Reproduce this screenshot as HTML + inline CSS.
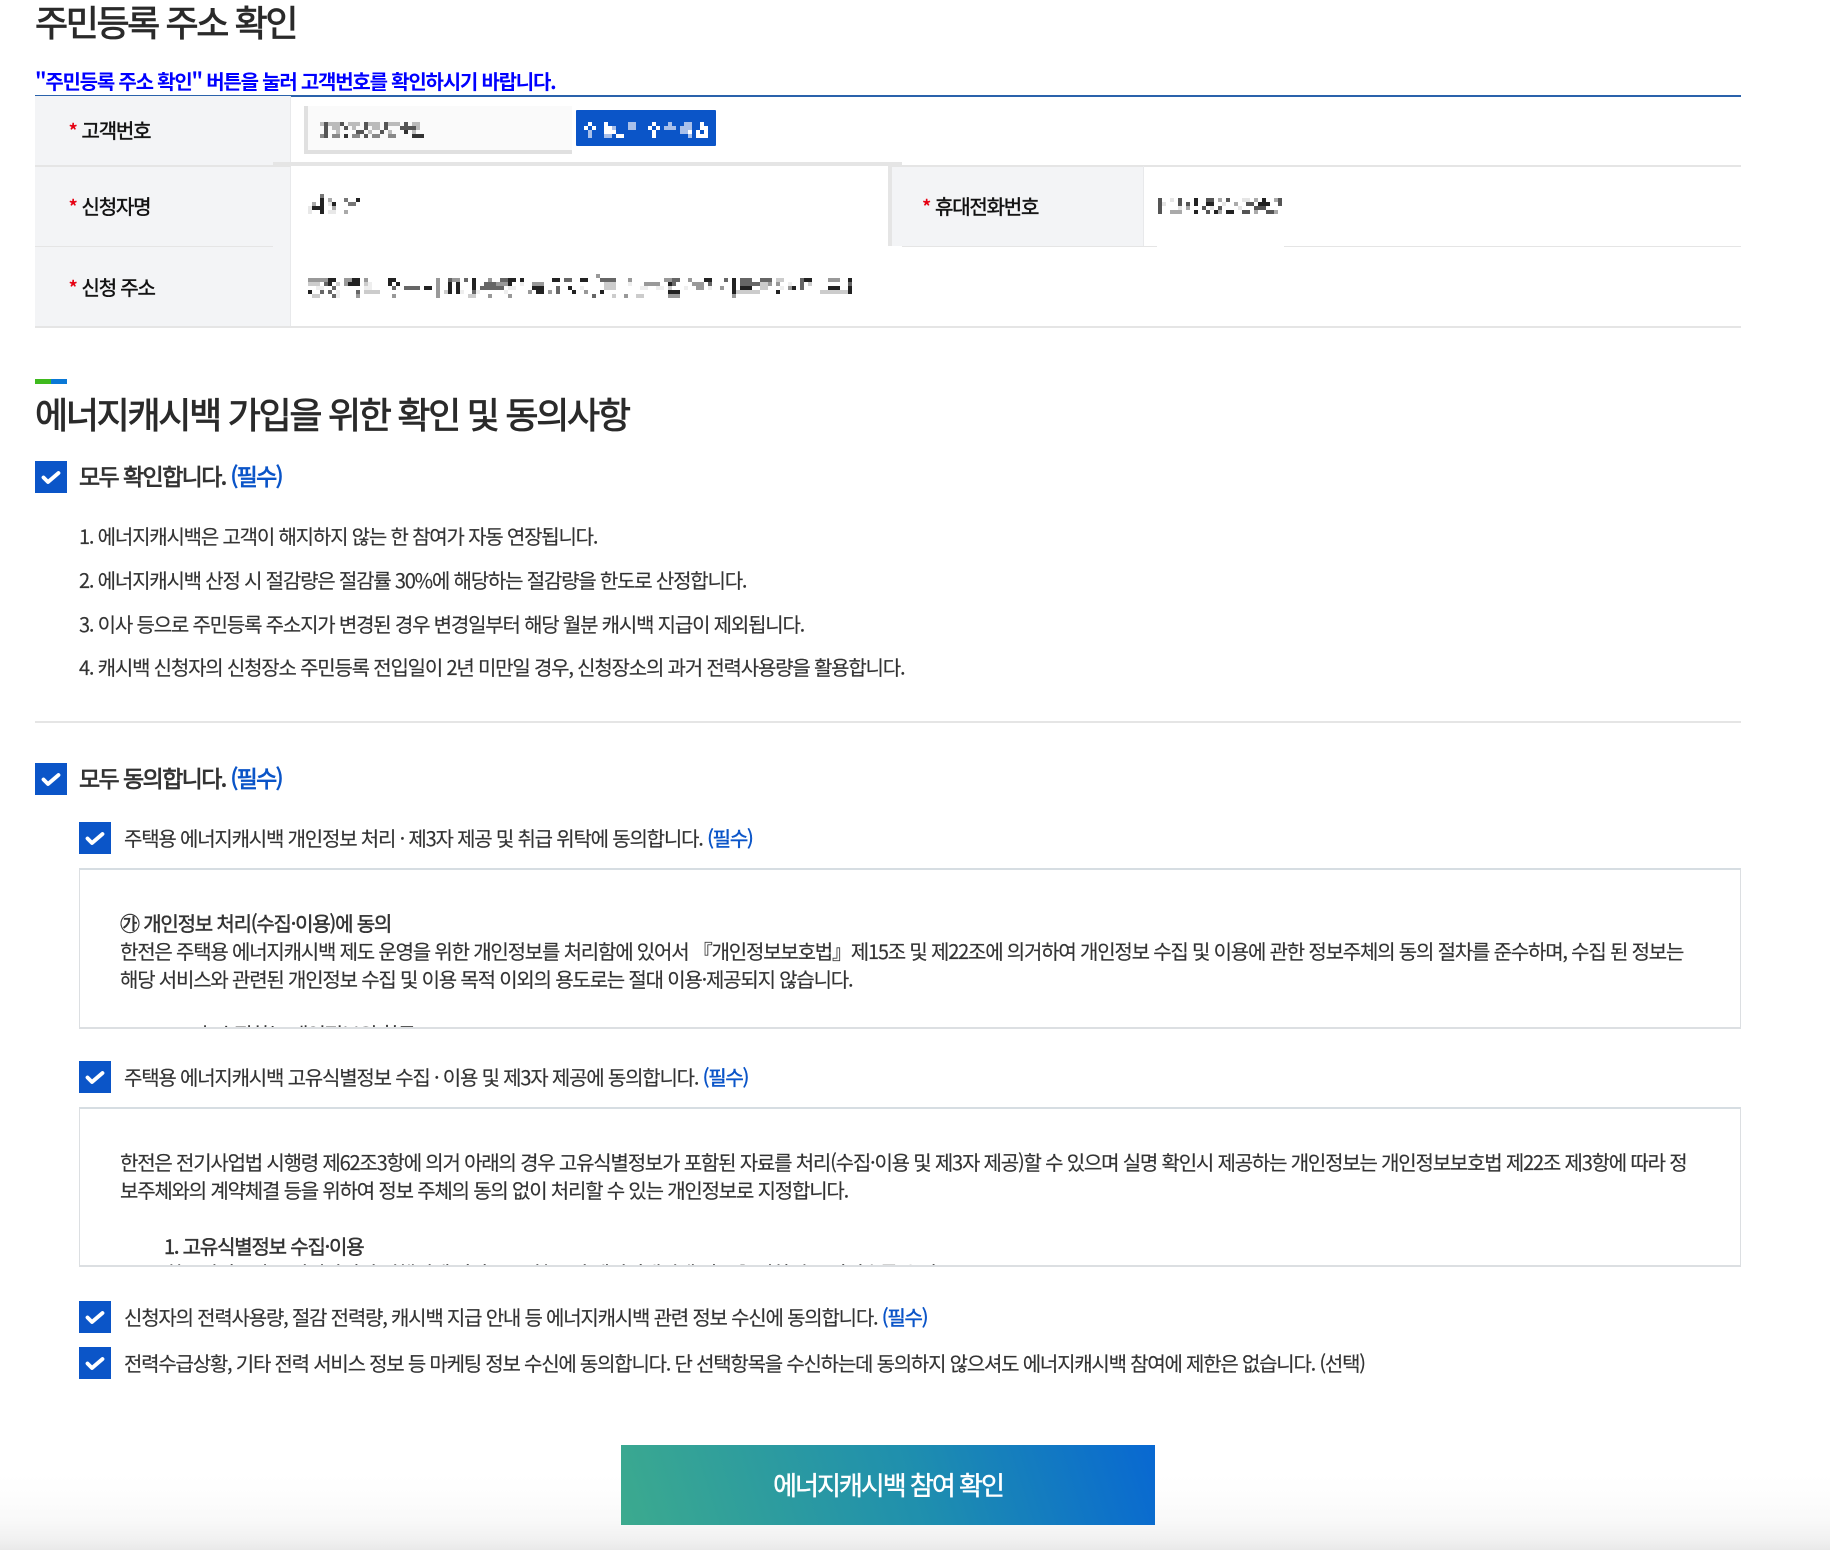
<!DOCTYPE html>
<html lang="ko">
<head>
<meta charset="utf-8">
<title>주민등록 주소 확인</title>
<style>
html,body{margin:0;padding:0}
body{position:relative;width:1830px;height:1550px;overflow:hidden;background:linear-gradient(to bottom,#fff 0,#fff 1475px,#fdfdfd 1495px,#f9f9f9 1520px,#f2f2f2 1538px,#e9e9e9 1550px);font-family:"Noto Sans CJK KR","Liberation Sans",sans-serif;color:#333;letter-spacing:-1.2px}
.a{position:absolute;display:block}
.t{position:absolute;white-space:nowrap;font-size:20px;line-height:30px;color:#333;-webkit-text-stroke:.15px currentColor}
.m{-webkit-text-stroke:.45px currentColor}
.h{font-size:36px;line-height:42px;letter-spacing:-2.4px;color:#2a2a2a;-webkit-text-stroke:.85px currentColor}
.s{font-size:23px;letter-spacing:-1.6px;-webkit-text-stroke:.75px currentColor}
.b{color:#0b55c8}
.th{position:absolute;background:#f3f4f6}
.ln{position:absolute;background:#e5e5e5}
.lab{color:#111;-webkit-text-stroke:.45px currentColor}
.lab i{position:absolute;left:-13px;top:1px;color:#e60012;font-style:normal;font-size:20px;letter-spacing:0}
.cb{position:absolute;width:32px;height:32px;background:#0b55c8}
.cb svg{display:block}
.box{position:absolute;left:79px;width:1660px;overflow:hidden;background:#fff;border:1px solid #dcdfe2;border-top:2px solid #d6dde2;border-bottom:2px solid #dcdfe2}
.box .t{margin:0}
svg.mo{position:absolute;fill:none;stroke-width:1}
</style>
</head>
<body>

<div class="t h" style="left:35px;top:0">주민등록 주소 확인</div>
<div class="t" style="left:35px;top:66px;font-weight:700;color:#0000ff;letter-spacing:-1.22px;-webkit-text-stroke:0">"주민등록 주소 확인" 버튼을 눌러 고객번호를 확인하시기 바랍니다.</div>
<div class="ln" style="left:35px;top:95px;width:1706px;height:1.5px;background:#2a62ab"></div>

<!-- table -->
<div class="th" style="left:35px;top:96px;width:255px;height:231px"></div>
<div class="ln" style="left:290px;top:96px;width:1px;height:231px;background:#e8e9eb"></div>
<div class="ln" style="left:291px;top:166px;width:1px;height:80px;background:#fff"></div>
<div class="ln" style="left:35px;top:165px;width:256px;height:1.5px"></div>
<div class="ln" style="left:35px;top:246px;width:238px;height:1px"></div>
<div class="ln" style="left:35px;top:326px;width:1706px;height:1.5px"></div>

<div class="t lab" style="left:81.5px;top:115px"><i>*</i>고객번호</div>
<div class="t lab" style="left:81.5px;top:191px"><i>*</i>신청자명</div>
<div class="t lab" style="left:81.5px;top:272px"><i>*</i>신청 주소</div>

<div class="a" style="left:304px;top:106px;width:264px;height:44px;background:#fafafa;border-left:4px solid #e0e0e0;border-bottom:4px solid #e0e0e0"></div>
<svg class="mo" style="left:320px;top:122px" width="104" height="16" viewBox="0 0 26 4" shape-rendering="crispEdges">
<path stroke="#bbb" d="M0 .5h1M2 .5h3M7 .5h3M12 .5h3M17 .5h3M23 .5h2M3 1.5h2M8 1.5h1M13 1.5h2M24 1.5h1M4 2.5h1M12 2.5h1M17 2.5h1M23 2.5h1"/>
<path stroke="#555" d="M1 .5h1M5 .5h1M11 .5h1M16 .5h1M21 .5h1M1 1.5h1M6 1.5h1M11 1.5h1M16 1.5h1M20 1.5h4M1 2.5h1M9 2.5h2M15 2.5h1M1 3.5h1M11 3.5h1"/>
<path stroke="#888" d="M3 3.5h2M8 3.5h2M13 3.5h2M17 3.5h2M0 3.5h1"/>
<path stroke="#333" d="M23 3.5h3M6 3.5h1M21 2.5h1"/>
</svg>
<div class="a" style="left:576px;top:110px;width:140px;height:36px;background:#0b55c8;border-radius:1px"></div>
<svg class="mo" style="left:584px;top:122px" width="124" height="16" viewBox="0 0 31 4" shape-rendering="crispEdges">
<path stroke="#fff" d="M1 .5h1M5 .5h1M17 .5h1M29 .5h1M0 1.5h1M2 1.5h1M5 1.5h2M16 1.5h1M18 1.5h1M29 1.5h2M5 2.5h3M17 2.5h1M26 2.5h1M28 2.5h1M30 2.5h1M8 3.5h2M28 3.5h3M17 3.5h1"/>
<path stroke="#a9c0ea" d="M11 .5h2M21 .5h1M25 .5h2M7 1.5h1M11 1.5h2M20 1.5h3M24 1.5h3M1 2.5h1M24 2.5h2M5 3.5h2M1 3.5h1M26 3.5h1M11 .5h2"/>
</svg>
<div class="ln" style="left:273px;top:162px;width:629px;height:4px"></div>

<svg class="mo" style="left:308px;top:194px" width="56" height="20" viewBox="0 0 14 5" shape-rendering="crispEdges">
<path stroke="#222" d="M3 1.5h1M12 1.5h1M3 2.5h1M6 2.5h1M1 3.5h3M3 4.5h1"/>
<path stroke="#777" d="M3 .5h1M9 1.5h1M10 2.5h2"/>
<path stroke="#aaa" d="M5 1.5h1M1 2.5h1M6 3.5h1M9 4.5h1"/>
<path stroke="#e8e8e8" d="M5 2.5h1M0 3.5h1M0 4.5h1M5 4.5h2"/>
</svg>

<svg class="mo" style="left:308px;top:274px" width="548" height="24" viewBox="0 0 137 6" shape-rendering="crispEdges">
<path stroke="#222" d="M5 1.5h2M11 1.5h2M20 1.5h2M41 1.5h1M50 1.5h2M53 1.5h1M61 1.5h2M68 1.5h2M5 2.5h1M10 2.5h3M20 2.5h1M22 2.5h1M35 2.5h1M37 2.5h1M41 2.5h1M50 2.5h1M29 3.5h2M35 3.5h1M37 3.5h1M41 3.5h1M56 3.5h3M65 3.5h1M0 4.5h1M35 4.5h1M37 4.5h1M57 4.5h2M66 4.5h1M73 4.5h1M99 1.5h2M106 1.5h1M106 2.5h1M106 3.5h1M106 4.5h1M124 1.5h2M108 3.5h3M90 4.5h3M117 4.5h1M121 3.5h1M130 3.5h3M135 1.5h1M135 3.5h1M90 2.5h1M135 4.5h1"/>
<path stroke="#666" d="M4 2.5h1M6 3.5h1M21 3.5h1M24 3.5h4M43 3.5h6M44 2.5h3M3 4.5h1M5 4.5h1M12 4.5h1M41 4.5h1M62 3.5h1M62 4.5h1M6 5.5h1M71 5.5h1M35 1.5h1M39 1.5h1M48 1.5h2M64 1.5h2M73 1.5h4M91 1.5h2M104 1.5h1M91 2.5h1M100 2.5h1M108 1.5h3M108 2.5h5M113 1.5h3M123 2.5h1M123 3.5h1M123 1.5h1M135 2.5h1"/>
<path stroke="#999" d="M0 1.5h5M9 1.5h2M14 1.5h1M32 1.5h1M36 1.5h2M45 1.5h1M9 2.5h1M32 2.5h1M47 2.5h3M56 2.5h3M32 3.5h1M32 4.5h1M55 4.5h1M60 4.5h1M69 4.5h1M12 5.5h1M21 5.5h1M32 5.5h1M45 5.5h1M50 5.5h1M72 .5h1M80 1.5h1M84 2.5h4M89 1.5h2M95 1.5h1M96 2.5h3M97 3.5h2M103 3.5h1M115 2.5h1M117 2.5h1M106 5.5h1M120 3.5h1M130 1.5h3M79 5.5h1M90 5.5h3"/>
<path stroke="#ccc" d="M0 2.5h3M7 2.5h1M14 2.5h1M74 2.5h3M14 4.5h4M34 4.5h1M1 5.5h2M40 5.5h2M74 3.5h3M90 3.5h1M113 3.5h2M113 2.5h2M107 4.5h6M128 4.5h7M76 5.5h1M82 5.5h2M125 2.5h1M117 1.5h2"/>
<path stroke="#eee" d="M2 3.5h2M14 3.5h2M15 2.5h1M7 4.5h1M38 4.5h1M42 4.5h1M49 4.5h1M50 3.5h2M53 2.5h1M68 3.5h1M7 5.5h1M80 2.5h1M83 3.5h2M87 3.5h2M94 3.5h1M120 2.5h1M118 3.5h1M100 3.5h1"/>
</svg>

<!-- phone -->
<div class="ln" style="left:888px;top:166px;width:4px;height:80px"></div>
<div class="th" style="left:892px;top:166px;width:251px;height:80px"></div>
<div class="ln" style="left:892px;top:165px;width:849px;height:1.5px"></div>
<div class="ln" style="left:1143px;top:166px;width:1px;height:80px;background:#e8e9eb"></div>
<div class="ln" style="left:902px;top:246px;width:255px;height:1px"></div>
<div class="ln" style="left:1284px;top:246px;width:457px;height:1px"></div>
<div class="t lab" style="left:935px;top:191px"><i>*</i>휴대전화번호</div>
<svg class="mo" style="left:1158px;top:198px" width="128" height="16" viewBox="0 0 32 4" shape-rendering="crispEdges">
<path stroke="#222" d="M9 .5h1M26 .5h1M9 1.5h1M12 1.5h2M25 1.5h3M9 3.5h1M14 3.5h1M17 3.5h2"/>
<path stroke="#555" d="M0 .5h1M0 1.5h1M0 2.5h1M30 .5h1M30 1.5h1M5 .5h1M5 1.5h1M7 1.5h1M12 .5h2M17 .5h1M15 2.5h1M22 1.5h2M24 2.5h2M0 3.5h1M11 2.5h1M12 3.5h1M21 3.5h2M27 3.5h2M26 2.5h1"/>
<path stroke="#aaa" d="M3 3.5h3M7 2.5h1M15 .5h1M24 .5h1M19 1.5h1M15 3.5h1M24 3.5h1M29 3.5h1M29 .5h1"/>
<path stroke="#e5e5e5" d="M1 1.5h1M3 .5h1M13 2.5h1M21 .5h2M5 2.5h1M16 1.5h1M20 2.5h1"/>
</svg>

<!-- section -->
<div class="a" style="left:35px;top:379px;width:16px;height:5px;background:#3fba1e"></div>
<div class="a" style="left:51px;top:379px;width:16px;height:5px;background:#0a78d6"></div>
<div class="t h" style="left:35px;top:392px;letter-spacing:-2.3px">에너지캐시백 가입을 위한 확인 및 동의사항</div>

<div class="cb" style="left:35px;top:461px"><svg width="32" height="32"><path d="M8.5 16.5l4.5 4.5L23.5 12" fill="none" stroke="#fff" stroke-width="3.8" stroke-linecap="round" stroke-linejoin="round"/></svg></div>
<div class="t s" style="left:79px;top:460px">모두 확인합니다. <span class="b">(필수)</span></div>

<div class="t" style="left:79px;top:521px">1. 에너지캐시백은 고객이 해지하지 않는 한 참여가 자동 연장됩니다.</div>
<div class="t" style="left:79px;top:565px">2. 에너지캐시백 산정 시 절감량은 절감률 30%에 해당하는 절감량을 한도로 산정합니다.</div>
<div class="t" style="left:79px;top:609px">3. 이사 등으로 주민등록 주소지가 변경된 경우 변경일부터 해당 월분 캐시백 지급이 제외됩니다.</div>
<div class="t" style="left:79px;top:652px">4. 캐시백 신청자의 신청장소 주민등록 전입일이 2년 미만일 경우, 신청장소의 과거 전력사용량을 활용합니다.</div>

<div class="ln" style="left:35px;top:721px;width:1706px;height:1.5px"></div>

<div class="cb" style="left:35px;top:763px"><svg width="32" height="32"><path d="M8.5 16.5l4.5 4.5L23.5 12" fill="none" stroke="#fff" stroke-width="3.8" stroke-linecap="round" stroke-linejoin="round"/></svg></div>
<div class="t s" style="left:79px;top:762px">모두 동의합니다. <span class="b">(필수)</span></div>

<div class="cb" style="left:79px;top:822px"><svg width="32" height="32"><path d="M8.5 16.5l4.5 4.5L23.5 12" fill="none" stroke="#fff" stroke-width="3.8" stroke-linecap="round" stroke-linejoin="round"/></svg></div>
<div class="t" style="left:124px;top:823px">주택용 에너지캐시백 개인정보 처리 · 제3자 제공 및 취급 위탁에 동의합니다. <span class="b m">(필수)</span></div>

<div class="box" style="top:868px;height:157px">
<div class="t m" style="left:40px;top:38px">㉮ 개인정보 처리(수집·이용)에 동의</div>
<div class="t" style="left:40px;top:66px">한전은 주택용 에너지캐시백 제도 운영을 위한 개인정보를 처리함에 있어서 『개인정보보호법』제15조 및 제22조에 의거하여 개인정보 수집 및 이용에 관한 정보주체의 동의 절차를 준수하며, 수집 된 정보는</div>
<div class="t" style="left:40px;top:94px">해당 서비스와 관련된 개인정보 수집 및 이용 목적 이외의 용도로는 절대 이용·제공되지 않습니다.</div>
<div class="t" style="left:111px;top:149px">가. 수집하는 개인정보의 항목</div>
</div>

<div class="cb" style="left:79px;top:1061px"><svg width="32" height="32"><path d="M8.5 16.5l4.5 4.5L23.5 12" fill="none" stroke="#fff" stroke-width="3.8" stroke-linecap="round" stroke-linejoin="round"/></svg></div>
<div class="t" style="left:124px;top:1062px">주택용 에너지캐시백 고유식별정보 수집 · 이용 및 제3자 제공에 동의합니다. <span class="b m">(필수)</span></div>

<div class="box" style="top:1107px;height:156px">
<div class="t" style="left:40px;top:38px">한전은 전기사업법 시행령 제62조3항에 의거 아래의 경우 고유식별정보가 포함된 자료를 처리(수집·이용 및 제3자 제공)할 수 있으며 실명 확인시 제공하는 개인정보는 개인정보보호법 제22조 제3항에 따라 정</div>
<div class="t" style="left:40px;top:66px">보주체와의 계약체결 등을 위하여 정보 주체의 동의 없이 처리할 수 있는 개인정보로 지정합니다.</div>
<div class="t m" style="left:84px;top:122px">1. 고유식별정보 수집·이용</div>
<div class="t" style="left:85px;top:149px">한국전력공사는 전기사업법 시행령에 따라 요금 청구 및 에너지캐시백 지급을 위하여 주민번호를 수집</div>
</div>

<div class="cb" style="left:79px;top:1301px"><svg width="32" height="32"><path d="M8.5 16.5l4.5 4.5L23.5 12" fill="none" stroke="#fff" stroke-width="3.8" stroke-linecap="round" stroke-linejoin="round"/></svg></div>
<div class="t" style="left:124px;top:1302px;letter-spacing:-1.21px">신청자의 전력사용량, 절감 전력량, 캐시백 지급 안내 등 에너지캐시백 관련 정보 수신에 동의합니다. <span class="b m">(필수)</span></div>

<div class="cb" style="left:79px;top:1347px"><svg width="32" height="32"><path d="M8.5 16.5l4.5 4.5L23.5 12" fill="none" stroke="#fff" stroke-width="3.8" stroke-linecap="round" stroke-linejoin="round"/></svg></div>
<div class="t" style="left:124px;top:1348px;letter-spacing:-1.225px">전력수급상황, 기타 전력 서비스 정보 등 마케팅 정보 수신에 동의합니다. 단 선택항목을 수신하는데 동의하지 않으셔도 에너지캐시백 참여에 제한은 없습니다. (선택)</div>

<div class="a" style="left:621px;top:1445px;width:534px;height:80px;background:linear-gradient(72deg,#3caa8e 0%,#1f8fae 55%,#0868d2 100%)"></div>
<div class="t m" style="left:621px;top:1465px;width:534px;text-align:center;font-size:26px;line-height:40px;letter-spacing:-2px;color:#fff">에너지캐시백 참여 확인</div>

</body>
</html>
